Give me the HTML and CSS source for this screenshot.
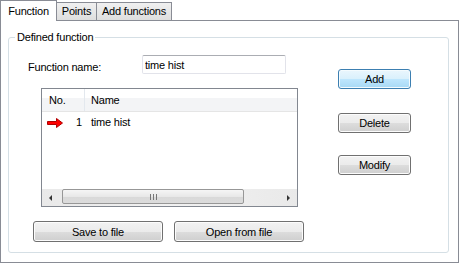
FILE: index.html
```html
<!DOCTYPE html>
<html lang="en">
<head>
    <meta charset="UTF-8">
    <title>Function</title>
    <link rel="stylesheet" href="styles.css">
</head>
<body>
    <div class="dialog">
        <div class="tabs">
            <div class="tab active">Function</div>
            <div class="tab tab-points">Points</div>
            <div class="tab tab-add">Add functions</div>
        </div>
        <div class="page">
            <fieldset class="group">
                <legend>Defined function</legend>
                <div class="group-body">
                    <div class="main-col">
                        <div class="name-row">
                            <label class="name-label" for="fn-name">Function name:</label>
                            <input class="name-input" id="fn-name" type="text" value="time hist">
                        </div>
                        <div class="list">
                            <div class="list-head">
                                <span class="col-no">No.</span>
                                <span class="col-name">Name</span>
                            </div>
                            <div class="list-rows">
                                <div class="list-row">
                                    <span class="col-no">
                                        <svg class="row-arrow" width="17" height="10" viewBox="0 0 17 10">
                                            <path d="M0.5 3.5 H9.5 V0.5 L15.5 5 L9.5 9.5 V6.5 H0.5 Z" fill="#ff0000" stroke="#b00000" stroke-width="1"/>
                                        </svg>
                                        <span class="row-num">1</span>
                                    </span>
                                    <span class="col-name">time hist</span>
                                </div>
                            </div>
                            <div class="hscroll">
                                <div class="scroll-btn"><span class="tri-left"></span></div>
                                <div class="scroll-track">
                                    <div class="scroll-thumb"><span class="grip"></span></div>
                                </div>
                                <div class="scroll-btn"><span class="tri-right"></span></div>
                            </div>
                        </div>
                        <div class="file-row">
                            <button class="btn btn-wide">Save to file</button>
                            <button class="btn btn-wide">Open from file</button>
                        </div>
                    </div>
                    <div class="side-col">
                        <button class="btn btn-default">Add</button>
                        <button class="btn btn-delete">Delete</button>
                        <button class="btn btn-modify">Modify</button>
                    </div>
                </div>
            </fieldset>
        </div>
    </div>
</body>
</html>
```

FILE: styles.css
```css
* {
    box-sizing: border-box;
}
body {
    margin: 0;
    background-color: #fff;
    font-family: "Liberation Sans", Arial, sans-serif;
    font-size: 11px;
    letter-spacing: -0.2px;
    color: #000;
}
.dialog {
    width: 459px;
    height: 263px;
}
.tabs {
    display: flex;
    align-items: flex-end;
    height: 20px;
    position: relative;
    z-index: 1;
}
.tab {
    height: 18px;
    line-height: 16px;
    text-align: center;
    border: 1px solid #898c95;
    border-left: none;
    border-bottom: none;
    background: linear-gradient(#f0f0f0, #dedede);
}
.tab.active {
    width: 57px;
    height: 21px;
    line-height: 20px;
    margin-bottom: -1px;
    border-left: 1px solid #898c95;
    background: #fff;
}
.tab-points {
    width: 40px;
}
.tab-add {
    width: 75px;
}
.page {
    height: 243px;
    border: 1px solid #898c95;
    background-color: #fff;
    padding: 10px 9px 0 7px;
}
.group {
    margin: 0;
    padding: 0;
    height: 222px;
    border: 1px solid #d5dfe5;
    border-radius: 3px;
}
.group legend {
    margin-left: 6px;
    padding: 0 2px;
    line-height: 13px;
}
.group-body {
    display: flex;
}
.main-col {
    flex: 1;
}
.name-row {
    display: flex;
    align-items: flex-end;
    margin-top: 11px;
    padding-left: 19px;
}
.name-label {
    width: 114px;
    line-height: 13px;
}
.name-input {
    width: 144px;
    height: 19px;
    margin: 0;
    padding: 0 2px;
    border: 1px solid #e2e3ea;
    border-top-color: #abadb3;
    border-radius: 2px;
    font-family: inherit;
    font-size: 11px;
    letter-spacing: -0.2px;
    color: #000;
    outline: none;
}
.list {
    width: 257px;
    height: 119px;
    margin: 14px 0 0 32px;
    border: 1px solid #828790;
    display: flex;
    flex-direction: column;
}
.list-head {
    display: flex;
    height: 23px;
    line-height: 23px;
    background: linear-gradient(#fff 0%, #fff 40%, #f3f4f6 41%, #f3f4f6 100%);
    border-bottom: 1px solid #e5e5e5;
}
.list-head .col-no {
    width: 43px;
    padding-left: 7px;
    border-right: 1px solid #e3e8ee;
}
.list-head .col-name {
    padding-left: 6px;
}
.list-rows {
    flex: 1;
    padding-top: 2px;
}
.list-row {
    display: flex;
    height: 17px;
    line-height: 17px;
}
.list-row .col-no {
    width: 43px;
    display: flex;
    align-items: center;
    padding-left: 5px;
}
.row-arrow {
    display: block;
}
.row-num {
    margin-left: 12px;
}
.list-row .col-name {
    padding-left: 6px;
}
.hscroll {
    display: flex;
    height: 17px;
    background: linear-gradient(90deg, #e9e9e9, #f2f2f2 50%, #e9e9e9);
}
.scroll-btn {
    width: 17px;
    display: flex;
    align-items: center;
    justify-content: center;
}
.tri-left {
    width: 0;
    height: 0;
    border-top: 3px solid transparent;
    border-bottom: 3px solid transparent;
    border-right: 3px solid #333;
}
.tri-right {
    width: 0;
    height: 0;
    border-top: 3px solid transparent;
    border-bottom: 3px solid transparent;
    border-left: 3px solid #333;
}
.scroll-track {
    flex: 1;
    padding: 0 36px 0 3px;
}
.scroll-thumb {
    height: 15px;
    border: 1px solid #979797;
    border-radius: 2px;
    background: linear-gradient(#f5f5f5 0%, #e8e8e8 50%, #d8d8d8 51%, #dcdcdc 100%);
    display: flex;
    align-items: center;
    justify-content: center;
}
.grip {
    width: 7px;
    height: 6px;
    background: linear-gradient(90deg, #777 0 1px, transparent 1px 3px, #777 3px 4px, transparent 4px 6px, #777 6px 7px);
}
.file-row {
    display: flex;
    gap: 11px;
    margin: 14px 0 0 24px;
}
.btn {
    display: block;
    width: 73px;
    height: 20px;
    margin: 0;
    padding: 0;
    border: 1px solid #707070;
    border-radius: 3px;
    background: linear-gradient(#f2f2f2 0%, #ebebeb 50%, #dddddd 51%, #cfcfcf 100%);
    box-shadow: inset 0 0 0 1px #fcfcfc;
    font-family: inherit;
    font-size: 11px;
    letter-spacing: -0.2px;
    color: #000;
    text-align: center;
}
.btn-wide {
    width: 130px;
    height: 21px;
}
.btn-default {
    border-color: #3c7fb1;
    background: linear-gradient(#eaf6fd 0%, #d9f0fc 50%, #bee6fd 51%, #a7d9f5 100%);
    box-shadow: inset 0 0 0 1px #f4fbfe;
}
.side-col {
    width: 73px;
    margin-right: 37px;
    padding-top: 25px;
}
.btn-delete {
    margin-top: 24px;
}
.btn-modify {
    margin-top: 22px;
}
```
